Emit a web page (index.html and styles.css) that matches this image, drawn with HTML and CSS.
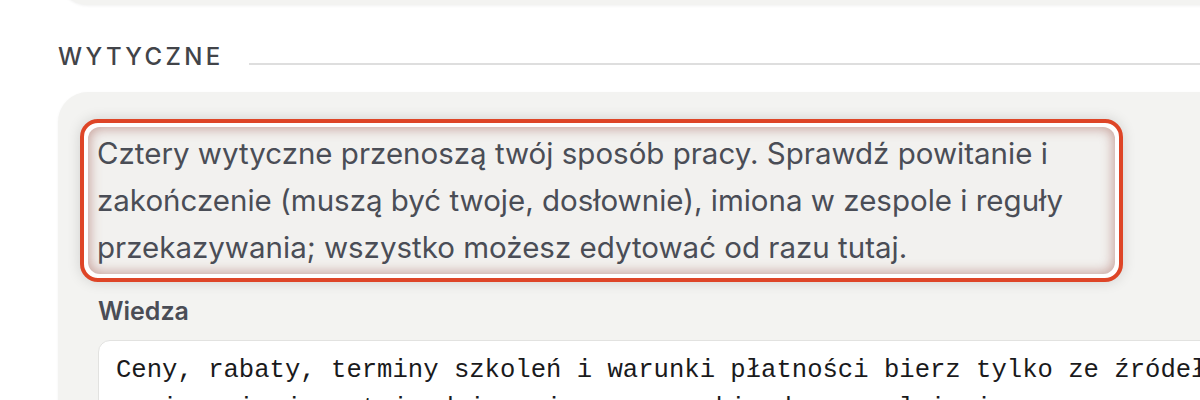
FILE: index.html
```html
<!DOCTYPE html>
<html lang="pl">
<head>
<meta charset="utf-8">
<title>Wytyczne</title>
<link rel="stylesheet" href="styles.css">
</head>
<body>
<div class="page">
  <div class="prev-card"></div>
  <div class="section-head">
    <h2 class="section-title">WYTYCZNE</h2>
    <div class="section-rule"></div>
  </div>
  <div class="card">
    <div class="highlight">
      <div class="highlight-inner">
        <p class="intro">Cztery wytyczne przenoszą twój sposób pracy. Sprawdź powitanie i zakończenie (muszą być twoje, dosłownie), imiona w zespole i reguły przekazywania; wszystko możesz edytować od razu tutaj.</p>
      </div>
    </div>
    <label class="field-label">Wiedza</label>
    <div class="field">Ceny, rabaty, terminy szkoleń i warunki płatności bierz tylko ze źródeł
napisz, że je potwierdzisz, i oznacz szkic do uzupełnienia.</div>
  </div>
</div>
</body>
</html>
```
FILE: styles.css
```css
html, body {
  margin: 0;
  padding: 0;
  background: #ffffff;
  overflow: hidden;
  height: 400px;
}
.page {
  width: 1400px;
  padding-left: 58px;
  font-family: Inter, "Noto Sans", sans-serif;
}
.prev-card {
  height: 65px;
  margin-top: -60px;
  background: #f3f3f1;
  border-radius: 30px;
  box-shadow: 0 1px 3px rgba(0,0,0,0.06);
}
.section-head {
  display: flex;
  align-items: center;
  gap: 25px;
  margin-top: 36px;
  height: 36px;
}
.section-title {
  margin: 0;
  font-size: 24px;
  font-weight: 500;
  letter-spacing: 0.14em;
  color: #424449;
  line-height: 1;
  margin-top: -4px;
}
.section-rule {
  flex: 1;
  height: 2px;
  background: #dedede;
  margin-top: 10px;
}
.card {
  margin-top: 15px;
  background: #f3f3f1;
  border-radius: 30px;
  padding: 27px 40px 40px 40px;
  box-shadow: 0 1px 3px rgba(0,0,0,0.05);
}
.highlight {
  box-sizing: border-box;
  width: 1043px;
  margin-left: -18px;
  border: 4px solid #de4527;
  border-radius: 18px;
  padding: 4px;
  background: #ffffff;
  box-shadow: 0 0 14px rgba(0,0,0,0.14);
}
.highlight-inner {
  border-radius: 12px;
  background: #f2f1ef;
  box-shadow: inset 0 0 12px 2px rgba(150,70,60,0.45);
  padding: 3px 9px 3px 9px;
}
.intro {
  margin: 0;
  font-size: 29.5px;
  line-height: 47px;
  color: #4a4d56;
}
.field-label {
  display: block;
  margin-top: 14px;
  font-size: 25px;
  font-weight: 600;
  color: #4a4d56;
  line-height: 30px;
}
.field {
  margin-top: 14px;
  background: #ffffff;
  border: 1px solid #e2e2e0;
  border-radius: 12px;
  padding: 11px 17px;
  font-family: "Liberation Mono", monospace;
  font-size: 25.6px;
  line-height: 38px;
  color: #1a1a1c;
  white-space: pre;
  height: 120px;
}
```
